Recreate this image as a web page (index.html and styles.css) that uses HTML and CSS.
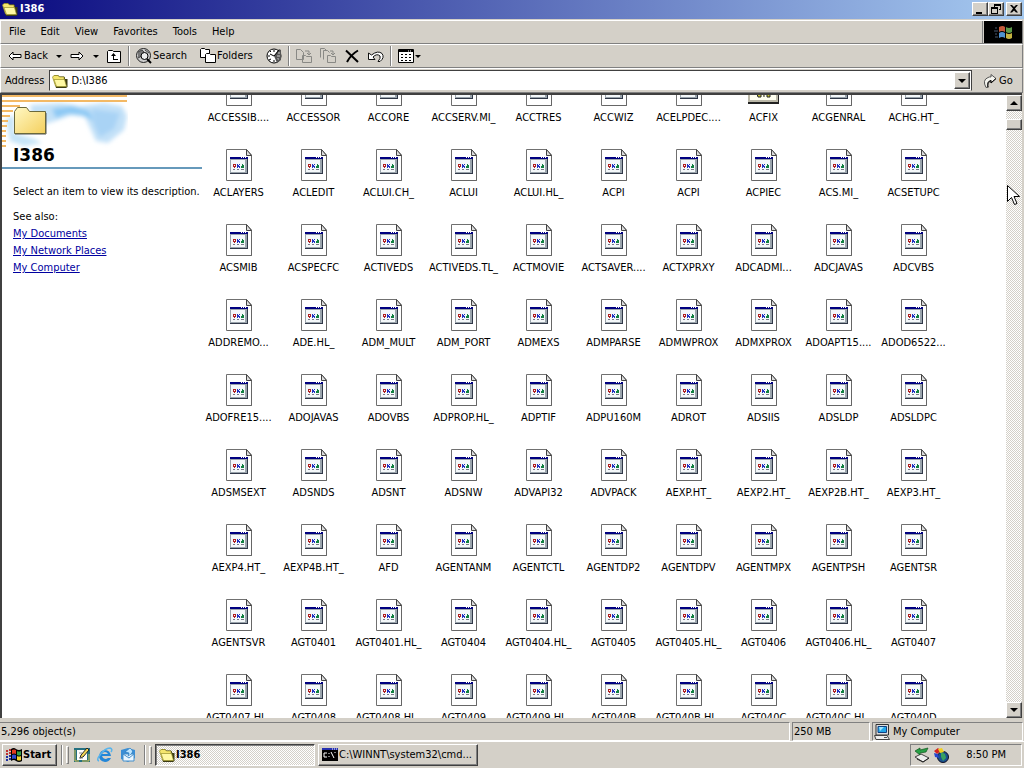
FILE: index.html
```html
<!DOCTYPE html>
<html lang="en">
<head>
    <title>I386</title>
    <meta charset="UTF-8">
    <meta name="viewport" content="width=device-width, initial-scale=1.0">
    <link rel="stylesheet" href="styles.css">
</head>
<body>
    <!-- shared icons -->
    <svg width="0" height="0" class="sprites" aria-hidden="true">
        <symbol id="icon-folder" viewBox="0 0 16 16">
            <path d="M1 3.500L2.500 2H6l1.500 1.500H12l1 1V6h2.500v8L14 15H4z" fill="#3c3c14"/>
            <path d="M.5 4L2 2.500h4L7.500 4H12v9H3.500z" fill="#f4e66e" stroke="#98902c" stroke-width=".7"/>
            <path d="M2 6.500h10.500l2 7H4.500z" fill="#fff9a4" stroke="#98902c" stroke-width=".7"/>
        </symbol>
        <symbol id="icon-file" viewBox="0 0 31 32">
            <path d="M3.500.5h20l5 5.500v25.500h-25z" fill="#fff" stroke="#707070"/>
            <path d="M23.500.5v6h5z" fill="#ddd" stroke="#444"/>
            <path d="M28.500 7v24.500h-24" fill="none" stroke="#666"/>
            <path d="M7 8h18v17H7z" fill="#303848"/>
            <path d="M7 8h17v16H7z" fill="#9aa4ac"/>
            <path d="M8 11h14v12H8z" fill="#f4f8fa"/>
            <path d="M7 8h18v2H7z" fill="#000080"/>
            <path d="M18 8h1v1h-1zM20 8h1v1h-1zM22 8h1v1h-1z" fill="#fff"/>
            <path d="M10 15h3v3h-1v1h-1v-1h-1z" fill="#b02020"/>
            <path d="M11 16h1v1h-1z" fill="#fff"/>
            <path d="M14 15h1v1h1v-1h1v1h-1v1h1v2h-1v-1h-1v1h-1z" fill="#2030c0"/>
            <path d="M19 15h1v1h1v3h-3v-2h1z" fill="#108040"/>
            <path d="M10 20.500h2M14 20.500h2M18 20.500h3" stroke="#778"/>
        </symbol>
        <symbol id="icon-app" viewBox="0 0 31 32">
            <path d="M0 4h31v26H0z" fill="#222"/>
            <path d="M0 4h30v24H0z" fill="#bbb8a8"/>
            <path d="M2 9h26v17H2z" fill="#fffff0"/>
            <path d="M2 5h26v4H2z" fill="#000080"/>
            <path d="M9 20h4v3h-3zM15 20h1v3M19 20h3v3h-3z" fill="#cc3" stroke="#222"/>
        </symbol>
    </svg>

    <header class="title-bar">
        <svg class="icon"><use href="#icon-folder"/></svg>
        <h1>I386</h1>
        <div class="window-buttons">
            <button aria-label="Minimize"><svg width="14" height="12"><path d="M3 9h6v2H3z"/></svg></button>
            <button aria-label="Restore"><svg width="14" height="12"><path d="M5 1h7v6h-2V6h1V3H6v1H5zM2 4h7v7H2zm1 2v4h5V6z" fill-rule="evenodd"/></svg></button>
            <button aria-label="Close" class="close"><svg width="14" height="12"><path d="M3 2h2l2 2 2-2h2L8 5.500 11 9.500H9L7 7.500l-2 2H3l3-4z"/></svg></button>
        </div>
    </header>

    <div class="bars">
        <nav class="menu-bar">
            <div class="menus">
                <button>File</button>
                <button>Edit</button>
                <button>View</button>
                <button>Favorites</button>
                <button>Tools</button>
                <button>Help</button>
            </div>
            <div class="throbber">
                <svg width="38" height="22" viewBox="0 0 38 22">
                    <path d="M15 6q4-2 6 0v5q-3-2-6 0z" fill="#c65a3c"/>
                    <path d="M22 6q3 2 6 0v5q-3 2-6 0z" fill="#5d9a4a"/>
                    <path d="M15 12q3-2 6 0v5q-3-2-6 0z" fill="#4f92cf"/>
                    <path d="M22 12q3 2 6 0v5q-3 2-6 0z" fill="#c5b340"/>
                    <path d="M11 7h2M10 10h4M11 13h2M11 16h3" stroke="#4a5970"/>
                </svg>
            </div>
        </nav>

        <div class="toolbar">
            <button class="tool">
                <svg class="icon" viewBox="0 0 16 16"><path d="M2 8l4-4v2.500h8v3H6V12z" fill="#fff" stroke="#000"/></svg>Back
            </button>
            <button class="arrow" aria-label="Back history"></button>
            <button class="tool" aria-label="Forward">
                <svg class="icon" viewBox="0 0 16 16"><path d="M14 8l-4-4v2.500H2v3h8V12z" fill="#fff" stroke="#000"/></svg>
            </button>
            <button class="arrow" aria-label="Forward history"></button>
            <button class="tool" aria-label="Up">
                <svg class="icon" viewBox="0 0 16 16"><path d="M1.500 14.500v-11l1-1h4l1 1h7v11z" fill="#fff" stroke="#000"/><path d="M5 8l2.500-3L10 8H8v3h4v1H7V8z"/></svg>
            </button>
            <span class="divider"></span>
            <button class="tool labelled">
                <svg class="icon" viewBox="0 0 16 16"><circle cx="7.500" cy="7.500" r="7" fill="#ccc" stroke="#222"/><path d="M2 4l4-2 2 2-2 4-4 2M9 2l4 3" fill="#777" stroke="#444"/><circle cx="8.500" cy="8" r="3.500" fill="#eee" stroke="#000"/><path d="M11 11l4 4" stroke="#000" stroke-width="2"/></svg>Search
            </button>
            <button class="tool labelled">
                <svg class="icon" viewBox="0 0 16 16"><path d="M.5 9.500v-8l1-1h3l1 1h4v8z" fill="#fff" stroke="#000"/><path d="M5.500 14.500v-8l1-1h3l1 1h5v8z" fill="#fff" stroke="#000"/></svg>Folders
            </button>
            <button class="tool" aria-label="History">
                <svg class="icon" viewBox="0 0 16 16"><circle cx="8" cy="8" r="7" fill="#fff" stroke="#000"/><path d="M8 8l5-7 2 1v10l-4 3z" fill="#555"/><path d="M8 8l5-6M8 8L4 6M8 2v2M2 8h2M8 12v2M3 12l2-1M4 3l1 1M12 12l-1-1" stroke="#000" fill="none"/><path d="M12 5h2M11 8h3M11 11h2" stroke="#ccc"/></svg>
            </button>
            <span class="divider"></span>
            <button class="tool edit" aria-label="Move To" disabled>
                <svg class="icon" viewBox="0 0 16 16"><path d="M.5 11.500V1.500h4l3 3v7zM6.500 14.500v-7h3l1 1h5v6zM9 3h4v3M11 5l2 2 2-2" fill="none" stroke="#898985"/></svg>
            </button>
            <button class="tool edit" aria-label="Copy To" disabled>
                <svg class="icon" viewBox="0 0 16 16"><path d="M.5 9.500v-9h4l2 2M3.500 11.500v-9h4l2 2M7.500 14.500v-7h3l1 1h4v6zM10 3h3v3M11 5l2 2 2-2" fill="none" stroke="#898985"/></svg>
            </button>
            <button class="tool edit" aria-label="Delete">
                <svg class="icon" viewBox="0 0 16 16"><path d="M2 2.500l12 11.500M14 2.500q-7 4-11 11.500" fill="none" stroke="#000" stroke-width="2"/></svg>
            </button>
            <button class="tool" aria-label="Undo">
                <svg class="icon" viewBox="0 0 16 16"><path d="M.5 5v6.500H7L5 9q4-4 7-1 1 2-2 5.500h2q5-4 2-8Q10 2 3.500 7z" fill="#fff" stroke="#111"/></svg>
            </button>
            <span class="divider"></span>
            <button class="tool views" aria-label="Views">
                <svg class="icon" viewBox="0 0 16 16"><path d="M.5 1.500h15v13H.5z" fill="#fff" stroke="#000"/><path d="M1 3h14" stroke="#000" stroke-width="2"/><path d="M10 3h1M12 3h1" stroke="#fff"/><path d="M3 6.500h2M7 6.500h2M11 6.500h2M3 9.500h2M7 9.500h2M11 9.500h2M3 12.500h2M7 12.500h2M11 12.500h2" stroke="#000"/></svg>
                <span class="arrow"></span>
            </button>
        </div>

        <div class="address-bar">
            <label for="address">Address</label>
            <div class="combo">
                <svg class="icon"><use href="#icon-folder"/></svg>
                <input id="address" type="text" value="D:\I386">
                <button class="raised" aria-label="Show addresses"><span class="arrow down"></span></button>
            </div>
            <button class="go">
                <svg class="icon" viewBox="0 0 16 16"><path d="M3 14.500Q-1 7 5 4.500q2-1 3-.500V1.500l5 4-5 4.500V7.500Q3 8 5 14z" fill="#f4f4ee" stroke="#555"/><path d="M5 14.500q-1-5 3-7V10l5-4.500" fill="none" stroke="#000"/></svg>Go
            </button>
        </div>
    </div>

    <main class="content">
        <aside class="side-panel">
            <div class="banner">
                <svg class="clouds" width="126" height="58" viewBox="0 0 126 58">
                    <defs>
                        <filter id="soft" x="-20%" y="-20%" width="140%" height="140%"><feGaussianBlur stdDeviation="2"/></filter>
                    </defs>
                    <g filter="url(#soft)">
                        <path d="M28 10l30-2 20 3 24-3 18 3 5 10-3 14-10 8-6 5-12-2-5-11-6-13-14-2-16 6-20 6z" fill="#c3e1f8"/>
                        <path d="M50 14l20-3 17 5 5 10-12-6-14-1-12 4z" fill="#8dc9f4"/>
                        <path d="M4 24l8-4v18l20 6 8 4-18 3-14-5z" fill="#c6e4f7"/>
                        <path d="M90 14l28 4-6 16-14 8-6-12z" fill="#a9d3f5"/>
                    </g>
                    <path d="M0 1h125M0 6h125" stroke="#f3b965" stroke-width="2"/>
                    <path d="M0 11h18M0 16h11M0 21h8M0 26h6M0 31h5M0 36h4M0 41h4M0 46h4M0 51h4" stroke="#f3b965" stroke-width="2"/>
                </svg>
                <svg class="big-folder" width="34" height="30" viewBox="0 0 34 30">
                    <defs>
                        <linearGradient id="gold" x1="0" y1="0" x2="1" y2="1">
                            <stop offset="0" stop-color="#fff8c4"/>
                            <stop offset="1" stop-color="#f4cf5d"/>
                        </linearGradient>
                    </defs>
                    <path d="M2 28h31V7" fill="none" stroke="#555" stroke-width="1"/>
                    <path d="M1.500 27.500V5.500l3-4h9l3 4h16v22z" fill="url(#gold)" stroke="#69683c"/>
                </svg>
            </div>
            <h2>I386</h2>
            <div class="description">
                <p>Select an item to view its description.</p>
                <p>See also:</p>
                <a href="#">My Documents</a>
                <a href="#">My Network Places</a>
                <a href="#">My Computer</a>
            </div>
        </aside>
        <div class="file-area">
            <div class="files" id="files"></div>
        </div>
        <div class="scrollbar">
            <button class="raised" aria-label="Scroll up"><span class="arrow up"></span></button>
            <div class="thumb raised"></div>
            <button class="raised" aria-label="Scroll down"><span class="arrow down"></span></button>
        </div>
    </main>

    <footer class="status-bar">
        <div class="count">5,296 object(s)</div>
        <div class="size">250 MB</div>
        <div class="place">
            <svg class="icon" viewBox="0 0 16 16"><path d="M2 .5h12.500v10.500H2z" fill="#ddd" stroke="#333"/><path d="M4 2.500h8.500v6H4z" fill="#22a5e8" stroke="#124080"/><path d="M5 3h5L6 7z" fill="#9fe6ff"/><path d="M.5 11.500H13l2.500 4H2z" fill="#eee" stroke="#444"/><path d="M10 13.500h3" stroke="#555"/></svg>My Computer
        </div>
    </footer>

    <div class="taskbar">
        <button class="start">
            <svg class="icon" viewBox="0 0 16 16"><path d="M5 2q3-2 5 0 3 2 6 0v12q-3 2-6 0-2-2-5 0z" fill="#000"/><path d="M6 3q2-1 4 0v4Q8 6 6 7z" fill="#e43b20"/><path d="M11 4q2 1 4 0v4q-2 1-4 0z" fill="#33a048"/><path d="M6 8q2-1 4 0v4q-2-1-4 0z" fill="#3048d0"/><path d="M11 9q2 1 4 0v4q-2 1-4 0z" fill="#f2d330"/><path d="M0 4h2M3 3h2M0 7h2M3 6h2" stroke="#c03030" stroke-width="2"/><path d="M0 10h2M3 9h2M0 13h2M3 12h2" stroke="#2030a0" stroke-width="2"/></svg>Start
        </button>
        <span class="divider"></span>
        <span class="grip"></span>
        <div class="quick-launch">
            <button aria-label="Show Desktop"><svg class="icon" viewBox="0 0 16 16"><path d="M0 1h16v14H0z" fill="#247080"/><path d="M3 3h10v10H3z" fill="#fff"/><path d="M1 3v11h4M15 7v7H8" fill="none" stroke="#d9c04c"/><path d="M6 11l1-3 6-7 2 2-6 7z" fill="#f2d653" stroke="#222"/><path d="M5 6h3M5 11h4" stroke="#888"/></svg></button>
            <button aria-label="Internet Explorer"><svg class="icon" viewBox="0 0 16 16"><path d="M14 9H5q1 3 4 3l2-1h3q-2 4-6 4-6-1-6-6 1-6 6-6t6 6zM5 7h6q-1-2-3-2T5 7z" fill="#2386d8" fill-rule="evenodd"/><path d="M2 14q-3-1 1-6 5-7 10-7 3 1 1 4" fill="none" stroke="#58b4ec" stroke-width="1.500"/></svg></button>
            <button aria-label="Outlook Express"><svg class="icon" viewBox="0 0 16 16"><path d="M1 3l7-2 7 2v8l-7 4-7-3z" fill="#3a8ed6"/><path d="M3 7h11v7H3z" fill="#eaf6ff" stroke="#478fc9"/><path d="M3 7l6 4 5-4" fill="none" stroke="#478fc9"/><path d="M10 1l-5 4 4 1-1 3q6-3 4-6z" fill="#bde5ff" stroke="#2878bd" stroke-width=".7"/></svg></button>
        </div>
        <span class="divider"></span>
        <span class="grip"></span>
        <div class="tasks">
            <button class="task active"><svg class="icon"><use href="#icon-folder"/></svg>I386</button>
            <button class="task"><svg class="icon" viewBox="0 0 16 16"><path d="M0 1h16v13H0z" fill="#000"/><path d="M0 1h16v2H0z" fill="#2630b0"/><path d="M10 2h1M12 2h1M14 2h1" stroke="#fff"/><path d="M5 6H2v4h3M7 6v1M7 9v1M9 5l3 6M13 5v1" stroke="#fff" fill="none"/></svg>C:\WINNT\system32\cmd...</button>
        </div>
        <div class="tray">
            <svg class="icon" viewBox="0 0 16 16"><path d="M1 10l6-3 8 4-6 4z" fill="#eee" stroke="#444"/><path d="M3 12l6 3 6-4" stroke="#222" fill="none"/><path d="M1 4l5-3v2l8-2-2 4-6 1v2z" fill="#28a046" stroke="#10541e" stroke-width=".7"/></svg>
            <svg class="icon" viewBox="0 0 16 16"><circle cx="10" cy="10" r="5.500" fill="#1a5090" stroke="#112"/><path d="M8 5l4 2 1 4-3 3-2-4z" fill="#38a060"/><path d="M1 4l4-3 3 3-4 3z" fill="#d32222"/><path d="M5 2l4-1 2 4-4 1z" fill="#f0cf20"/><path d="M1 6l4 1 1 4-4-1z" fill="#2447d0"/></svg>
            <time>8:50 PM</time>
        </div>
    </div>

    <svg class="cursor" width="13" height="21" viewBox="0 0 13 21"><path d="M.5.5v16l4-4 3 7 2.500-1-3-7h5.500z" fill="#fff" stroke="#000"/></svg>

    <script src="script.js"></script>
</body>
</html>
```

FILE: styles.css
```css
* {
    box-sizing: border-box;
}

body {
    margin: 0;
    height: 100vh;
    display: flex;
    flex-direction: column;
    overflow: hidden;
    background-color: #d4d0c8;
    color: #000;
    font-family: "DejaVu Sans Condensed", "DejaVu Sans", sans-serif;
    font-stretch: condensed;
    font-size: 11px;
    line-height: 14px;
}

button {
    display: flex;
    align-items: center;
    padding: 0;
    border: none;
    background: none;
    color: inherit;
    font: inherit;
    white-space: nowrap;
}

h1, h2, p {
    margin: 0;
}

svg {
    flex: none;
    display: block;
}

.sprites {
    position: absolute;
}

.icon {
    width: 16px;
    height: 16px;
}

.raised,
.window-buttons button {
    justify-content: center;
    background-color: #d4d0c8;
    border: 1px solid;
    border-color: #fff #404040 #404040 #fff;
    box-shadow: inset -1px -1px #808080;
}

.arrow {
    width: 15px;
    display: flex;
    justify-content: center;
}

.arrow::before {
    content: '';
    border: 3px solid transparent;
    border-top-color: #000;
    border-bottom: none;
}

.arrow.down::before {
    border-width: 4px;
    border-bottom: none;
}

.arrow.up::before {
    border: 4px solid transparent;
    border-bottom-color: #000;
    border-top: none;
}

/* title bar */
.title-bar {
    flex: none;
    height: 19px;
    display: flex;
    align-items: center;
    gap: 2px;
    padding: 0 2px 1px;
    background: linear-gradient(to right, #0a0a80, #a6caf0);
    color: #fff;
}

.title-bar h1 {
    font-size: 11px;
}

.window-buttons {
    margin-left: auto;
    display: flex;
}

.window-buttons button {
    width: 16px;
    height: 14px;
}

.window-buttons .close {
    margin-left: 2px;
}

/* menu, toolbar and address */
.bars {
    flex: none;
    padding: 1px 1px 0 0;
}

.menu-bar,
.toolbar,
.address-bar {
    display: flex;
    border: 1px solid;
    border-color: #fff #808080 #808080 #fff;
}

.menu-bar {
    height: 24px;
}

.menus {
    flex: 1;
    display: flex;
    gap: 15px;
    padding-left: 8px;
    border-right: 1px solid #808080;
}

.throbber {
    margin-left: 1px;
    background-color: #000;
}

.toolbar {
    height: 24px;
    align-items: center;
    padding-left: 6px;
}

.tool {
    gap: 1px;
    margin-right: 6px;
}

.tool + .arrow {
    margin-left: -3px;
    margin-right: 3px;
}

.labelled {
    margin-right: 13px;
}

.divider {
    width: 2px;
    height: 20px;
    margin-right: 6px;
    border-left: 1px solid #808080;
    border-right: 1px solid #fff;
}

.edit {
    margin-right: 8px;
}

.views {
    gap: 0;
}

.views .arrow {
    width: 8px;
}

.address-bar {
    height: 25px;
    align-items: center;
    gap: 5px;
    padding-left: 4px;
}

.combo {
    flex: 1;
    height: 21px;
    display: flex;
    align-items: center;
    gap: 3px;
    padding: 1px 1px 1px 2px;
    background-color: #fff;
    border: 1px solid;
    border-color: #404040 #404040 #d4d0c8 #404040;
}

.combo input {
    flex: 1;
    min-width: 0;
    padding: 0;
    border: none;
    outline: none;
    font: inherit;
}

.combo button {
    width: 16px;
    height: 17px;
}

.go {
    width: 45px;
    padding-left: 6px;
}

/* folder window */
.content {
    flex: 1;
    min-height: 0;
    display: flex;
    margin: 0 2px 0 0;
    background-color: #fff;
    border: solid #404040;
    border-width: 2px 0 0 2px;
}

.side-panel {
    flex: none;
    width: 199px;
}

.banner {
    position: relative;
    height: 50px;
}

.big-folder {
    position: absolute;
    top: 11px;
    left: 11px;
}

.side-panel h2 {
    position: relative;
    width: 200px;
    height: 24px;
    padding-left: 11px;
    border-bottom: 2px solid #6699bb;
    font-family: "DejaVu Sans", sans-serif;
    font-stretch: normal;
    font-size: 17px;
    line-height: 20px;
}

.description {
    display: flex;
    flex-direction: column;
    align-items: flex-start;
    gap: 3px;
    padding: 16px 0 0 11px;
    white-space: nowrap;
}

.description p:first-child {
    margin-bottom: 8px;
}

.description a {
    color: #0000a0;
}

.file-area {
    flex: 1;
    min-width: 0;
    overflow: hidden;
}

.files {
    display: grid;
    grid-template-columns: repeat(auto-fill, 75px);
    grid-auto-rows: 75px;
    margin-top: -25px; /* scrolled down a little */
}

.file {
    display: flex;
    flex-direction: column;
    align-items: center;
    gap: 5px;
    padding-top: 4px;
    white-space: nowrap;
}

.file svg {
    width: 31px;
    height: 32px;
}

.scrollbar {
    flex: none;
    width: 16px;
    display: flex;
    flex-direction: column;
    background: repeating-conic-gradient(#d4d0c8 0 25%, #fff 0 50%) 0 0 / 2px 2px;
}

.scrollbar button {
    height: 16px;
}

.scrollbar .thumb {
    height: 11px;
    margin: 8px 0 auto;
}

/* status bar */
.status-bar {
    flex: none;
    display: flex;
    gap: 2px;
    height: 23px;
    padding: 4px 1px 0 0;
}

.status-bar div {
    display: flex;
    align-items: center;
    gap: 3px;
    padding-left: 1px;
    border: 1px solid;
    border-color: #808080 #fff #fff #808080;
}

.status-bar .count {
    flex: 1;
    border-left: none;
}

.status-bar .size {
    width: 78px;
}

.status-bar .place {
    width: 151px;
}

/* taskbar */
.taskbar {
    flex: none;
    height: 27px;
    display: flex;
    align-items: center;
    padding: 1px 2px 1px 2px;
    border-top: 1px solid #fff;
}

.start,
.task {
    height: 22px;
    gap: 1px;
    padding: 0 3px;
    border: 1px solid;
    border-color: #fff #404040 #404040 #fff;
    box-shadow: inset -1px -1px #808080;
}

.start {
    width: 55px;
    margin-right: 4px;
    font-weight: bold;
}

.taskbar .divider {
    margin-right: 3px;
}

.grip {
    width: 3px;
    height: 18px;
    border: 1px solid;
    border-color: #fff #808080 #808080 #fff;
}

.quick-launch {
    display: flex;
    gap: 7px;
    padding: 0 8px 0 5px;
}

.tasks {
    flex: 1;
    display: flex;
    gap: 3px;
    padding-left: 3px;
}

.task {
    width: 160px;
}

.task.active {
    background: repeating-conic-gradient(#d4d0c8 0 25%, #fff 0 50%) 0 0 / 2px 2px;
    border-color: #404040 #fff #fff #404040;
    box-shadow: inset 1px 1px #808080;
    font-weight: bold;
}

.tray {
    width: 112px;
    height: 22px;
    display: flex;
    align-items: center;
    gap: 3px;
    padding: 0 15px 0 3px;
    border: 1px solid;
    border-color: #808080 #fff #fff #808080;
}

.tray time {
    margin-left: auto;
    white-space: nowrap;
}

.cursor {
    position: absolute;
    top: 185px;
    right: 4px;
}
```

FILE: script.js
```javascript
const names = [
    "ACCESSIB....", "ACCESSOR", "ACCORE", "ACCSERV.MI_", "ACCTRES", "ACCWIZ", "ACELPDEC....", "ACFIX", "ACGENRAL", "ACHG.HT_",
    "ACLAYERS", "ACLEDIT", "ACLUI.CH_", "ACLUI", "ACLUI.HL_", "ACPI", "ACPI", "ACPIEC", "ACS.MI_", "ACSETUPC",
    "ACSMIB", "ACSPECFC", "ACTIVEDS", "ACTIVEDS.TL_", "ACTMOVIE", "ACTSAVER....", "ACTXPRXY", "ADCADMI...", "ADCJAVAS", "ADCVBS",
    "ADDREMO...", "ADE.HL_", "ADM_MULT", "ADM_PORT", "ADMEXS", "ADMPARSE", "ADMWPROX", "ADMXPROX", "ADOAPT15....", "ADOD6522...",
    "ADOFRE15....", "ADOJAVAS", "ADOVBS", "ADPROP.HL_", "ADPTIF", "ADPU160M", "ADROT", "ADSIIS", "ADSLDP", "ADSLDPC",
    "ADSMSEXT", "ADSNDS", "ADSNT", "ADSNW", "ADVAPI32", "ADVPACK", "AEXP.HT_", "AEXP2.HT_", "AEXP2B.HT_", "AEXP3.HT_",
    "AEXP4.HT_", "AEXP4B.HT_", "AFD", "AGENTANM", "AGENTCTL", "AGENTDP2", "AGENTDPV", "AGENTMPX", "AGENTPSH", "AGENTSR",
    "AGENTSVR", "AGT0401", "AGT0401.HL_", "AGT0404", "AGT0404.HL_", "AGT0405", "AGT0405.HL_", "AGT0406", "AGT0406.HL_", "AGT0407",
    "AGT0407.HL_", "AGT0408", "AGT0408.HL_", "AGT0409", "AGT0409.HL_", "AGT040B", "AGT040B.HL_", "AGT040C", "AGT040C.HL_", "AGT040D"
];

const files = document.getElementById("files");

names.forEach((name) => {
    const icon = name === "ACFIX" ? "icon-app" : "icon-file";
    const file = document.createElement("div");
    file.className = "file";
    file.innerHTML = `<svg><use href="#${icon}"/></svg><span>${name}</span>`;
    files.appendChild(file);
});
```
